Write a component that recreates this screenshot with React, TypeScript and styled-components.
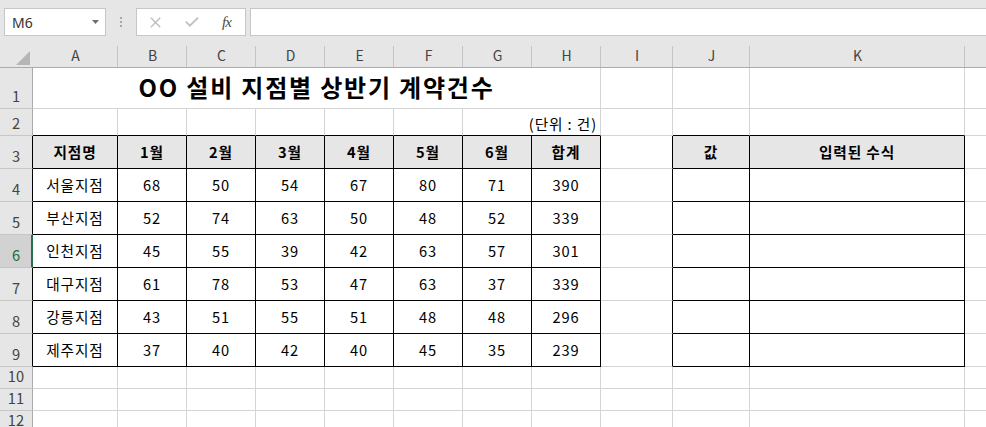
import React from 'react';
import styled, { createGlobalStyle } from 'styled-components';

const GlobalStyle = createGlobalStyle`
  html, body { margin: 0; padding: 0; background: #fff; overflow: hidden; }
  body { font-family: "Noto Sans CJK KR", "Noto Sans", sans-serif; }
`;

const GRID = '#d4d4d4';
const BLACK = '#000';

const Root = styled.div`
  width: 986px;
  height: 427px;
  overflow: hidden;
  background: #fff;
`;

const Toolbar = styled.div`
  height: 44px;
  box-sizing: border-box;
  padding-top: 8px;
  background: #e6e6e6;
  display: flex;
  align-items: flex-start;
`;

const NameBox = styled.div`
  margin-left: 4px;
  width: 102px;
  height: 28px;
  box-sizing: border-box;
  border: 1px solid #c6c6c6;
  background: #fff;
  display: flex;
  align-items: center;
  justify-content: space-between;
  padding: 0 6px 0 7px;
  font-family: "Noto Sans", "Open Sans", sans-serif;
  font-size: 14px;
  color: #333;
`;

const Grip = styled.div`
  margin: 9px 14px 0 14px;
  width: 2px;
  display: flex;
  flex-direction: column;
  gap: 2px;
`;

const Dot = styled.span`
  display: block;
  width: 2px;
  height: 2px;
  background: #a8a8a8;
`;

const ButtonBox = styled.div`
  width: 110px;
  height: 28px;
  box-sizing: border-box;
  border: 1px solid #c6c6c6;
  background: #fff;
  display: flex;
  align-items: center;
  padding-left: 13px;
  gap: 24px;
`;

const Fx = styled.span`
  font-family: "Liberation Serif", "DejaVu Serif", serif;
  font-style: italic;
  font-size: 15px;
  color: #4a4a4a;
  letter-spacing: -1px;
  line-height: 1;
  margin-left: -1px;
`;

const FormulaInput = styled.div`
  flex: 1;
  margin-left: 4px;
  height: 28px;
  box-sizing: border-box;
  border: 1px solid #c6c6c6;
  border-right: none;
  background: #fff;
`;

const Sheet = styled.div`
  display: grid;
  grid-template-columns: 33px 85px repeat(7, 69px) 72px 77px 215px 80px;
  grid-template-rows: 24px 41px 27px repeat(7, 33px) repeat(3, 22px);
  width: 1045px;
`;

const Corner = styled.div`
  box-sizing: border-box;
  background: #e6e6e6;
  border-bottom: 1px solid #ababab;
  display: flex;
  align-items: flex-end;
  justify-content: flex-end;
  padding: 0 3px 2px 0;
`;

const ColHeader = styled.div`
  box-sizing: border-box;
  background: linear-gradient(#c4c4c4, #c4c4c4) right bottom / 1px 21px no-repeat, #e6e6e6;
  border-bottom: 1px solid #ababab;
  display: flex;
  align-items: center;
  justify-content: center;
  font-size: 14px;
  color: #444;
  line-height: 1;
  padding-bottom: 1px;
`;

const RowHeader = styled.div<{ $edge: string; $selected?: boolean }>`
  box-sizing: border-box;
  background: ${p => (p.$selected ? '#d2d2d2' : '#e6e6e6')};
  border-bottom: 1px solid #c6c6c6;
  border-right: ${p => (p.$selected ? '2px solid #217346' : `1px solid ${p.$edge}`)};
  display: flex;
  align-items: flex-end;
  justify-content: center;
  padding-bottom: 4px;
  padding-left: ${p => (p.$selected ? '1px' : '0')};
  font-size: 14.67px;
  line-height: 1;
  color: ${p => (p.$selected ? '#1d6b40' : '#444')};
`;

const Cell = styled.div<{
  $right: string;
  $bottom: string;
  $span?: number;
  $fill?: boolean;
  $bold?: boolean;
  $kind?: 'title' | 'unit' | 'normal';
}>`
  grid-column: span ${p => p.$span ?? 1};
  box-sizing: border-box;
  min-width: 0;
  border-right: 1px solid ${p => p.$right};
  border-bottom: 1px solid ${p => p.$bottom};
  background: ${p => (p.$fill ? '#e7e6e6' : '#fff')};
  display: flex;
  align-items: ${p => (p.$kind === 'unit' ? 'flex-end' : 'center')};
  justify-content: ${p => (p.$kind === 'unit' ? 'flex-end' : 'center')};
  padding: ${p => (p.$kind === 'unit' ? '0 3px 3px 0' : p.$kind === 'title' ? '0 0 2px 0' : '0')};
  font-size: ${p => (p.$kind === 'title' ? '24px' : '14.67px')};
  letter-spacing: ${p => (p.$kind === 'title' ? '1.8px' : '0.9px')};
  font-weight: ${p => (p.$bold || p.$kind === 'title' ? 700 : 400)};
  color: #000;
  line-height: 1;
  white-space: nowrap;
`;

type CellSpec = { text?: string; span?: number; bold?: boolean; fill?: boolean; kind?: 'title' | 'unit' | 'normal' };

const COL_LETTERS = ['A', 'B', 'C', 'D', 'E', 'F', 'G', 'H', 'I', 'J', 'K', ''];

const DATA: [string, number[]][] = [
  ['서울지점', [68, 50, 54, 67, 80, 71, 390]],
  ['부산지점', [52, 74, 63, 50, 48, 52, 339]],
  ['인천지점', [45, 55, 39, 42, 63, 57, 301]],
  ['대구지점', [61, 78, 53, 47, 63, 37, 339]],
  ['강릉지점', [43, 51, 55, 51, 48, 48, 296]],
  ['제주지점', [37, 40, 42, 40, 45, 35, 239]],
];

const headerRow: CellSpec[] = [
  ...['지점명', '1월', '2월', '3월', '4월', '5월', '6월', '합계'].map(t => ({ text: t, bold: true, fill: true })),
  {},
  { text: '값', bold: true, fill: true },
  { text: '입력된 수식', bold: true, fill: true },
  {},
];

const ROWS: CellSpec[][] = [
  [{ text: 'OO 설비 지점별 상반기 계약건수', span: 8, kind: 'title' }, {}, {}, {}, {}],
  [{}, {}, {}, {}, {}, {}, { text: '(단위 : 건)', span: 2, kind: 'unit' }, {}, {}, {}, {}],
  headerRow,
  ...DATA.map(([name, nums]) => [
    { text: name },
    ...nums.map(n => ({ text: String(n) })),
    {},
    {},
    {},
    {},
  ] as CellSpec[]),
  Array.from({ length: 12 }, () => ({})),
  Array.from({ length: 12 }, () => ({})),
  Array.from({ length: 12 }, () => ({})),
];

const inTable = (r: number, c: number) =>
  r >= 3 && r <= 9 && ((c >= 0 && c <= 7) || c === 9 || c === 10);

const XIcon = () => (
  <svg width="11" height="11" viewBox="0 0 11 11">
    <path d="M0.8 0.8L10.2 10.2M10.2 0.8L0.8 10.2" stroke="#bcbcbc" strokeWidth="1.3" fill="none" />
  </svg>
);

const CheckIcon = () => (
  <svg width="14" height="10" viewBox="0 0 14 10">
    <path d="M0.8 4.6L4.8 8.6L13 0.8" stroke="#c2c2c2" strokeWidth="1.9" fill="none" />
  </svg>
);

const DropArrow = () => (
  <svg width="7" height="4" viewBox="0 0 7 4">
    <polygon points="0,0 7,0 3.5,4" fill="#6e6e6e" />
  </svg>
);

const CornerTriangle = () => (
  <svg width="14" height="14" viewBox="0 0 14 14">
    <polygon points="14,0 14,14 0,14" fill="#b6b6b6" />
  </svg>
);

export default function App() {
  return (
    <Root>
      <GlobalStyle />
      <Toolbar>
        <NameBox>
          <span>M6</span>
          <DropArrow />
        </NameBox>
        <Grip>
          <Dot />
          <Dot />
          <Dot />
        </Grip>
        <ButtonBox>
          <XIcon />
          <CheckIcon />
          <Fx>fx</Fx>
        </ButtonBox>
        <FormulaInput />
      </Toolbar>
      <Sheet>
        <Corner>
          <CornerTriangle />
        </Corner>
        {COL_LETTERS.map((l, i) => (
          <ColHeader key={'c' + i}>{l}</ColHeader>
        ))}
        {ROWS.map((row, ri) => {
          const r = ri + 1;
          let c = 0;
          return (
            <React.Fragment key={'r' + r}>
              <RowHeader $edge={inTable(r, 0) ? BLACK : '#ababab'} $selected={r === 6}>
                {r}
              </RowHeader>
              {row.map((cell, k) => {
                const span = cell.span ?? 1;
                const start = c;
                const end = c + span - 1;
                c += span;
                const right = inTable(r, end) || inTable(r, end + 1) ? BLACK : GRID;
                let bottomBlack = false;
                for (let x = start; x <= end; x++) {
                  if (inTable(r, x) || inTable(r + 1, x)) bottomBlack = true;
                }
                return (
                  <Cell
                    key={k}
                    $span={span}
                    $right={right}
                    $bottom={bottomBlack ? BLACK : GRID}
                    $fill={cell.fill}
                    $bold={cell.bold}
                    $kind={cell.kind ?? 'normal'}
                  >
                    {cell.text}
                  </Cell>
                );
              })}
            </React.Fragment>
          );
        })}
      </Sheet>
    </Root>
  );
}
